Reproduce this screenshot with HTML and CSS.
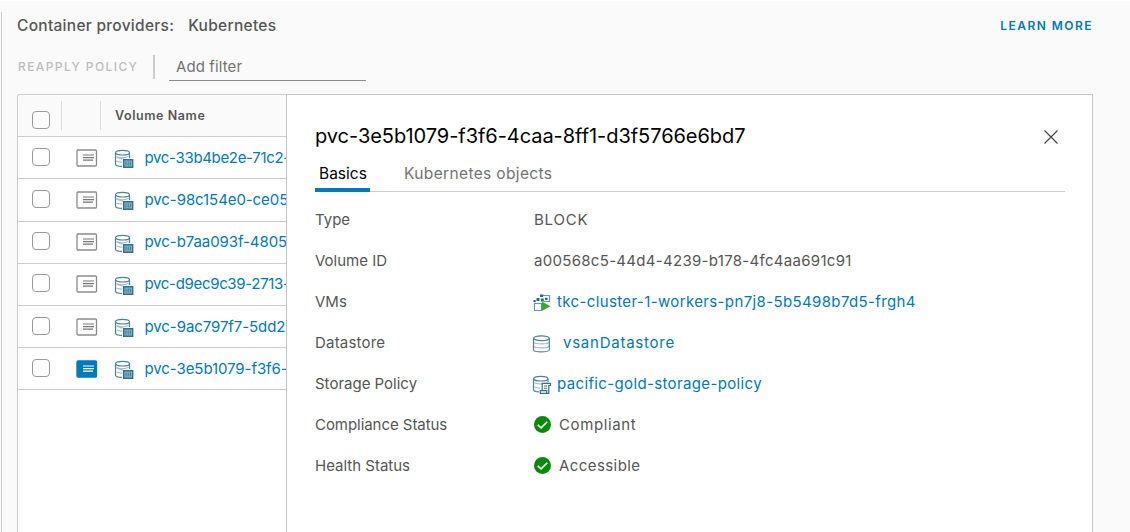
FILE: index.html
```html
<!DOCTYPE html>
<html lang="en">
<head>
<meta charset="utf-8">
<title>Container volumes</title>
<link rel="stylesheet" href="styles.css">
</head>
<body>
<svg class="defs" aria-hidden="true">
  <symbol id="note" viewBox="0 0 22 18">
    <rect class="note-box" x="1" y="1" width="19.5" height="16" rx="1"/>
    <path class="note-lines" d="M7 6h11M7 8.600h11M7 11.200h10"/>
  </symbol>
  <symbol id="disk" viewBox="0 0 20 20">
    <path class="disk-fill" d="M1.500 8c1 2.500 14.800 2.500 15.800 0M1.500 12c1 2.500 14.800 2.500 15.800 0"/>
    <path class="disk-line" d="M1.500 4.200v11.500c0 2.800 15.800 2.800 15.800 0V4.200"/>
    <ellipse class="disk-line" cx="9.400" cy="4.200" rx="7.900" ry="2.400"/>
  </symbol>
  <symbol id="volume" viewBox="0 0 20 20">
    <path class="disk-fill" d="M2.500 7.500c3 1.600 8 1.600 12 0M2.500 12c2 1 4 1.200 6 1M2.500 8.300l6 1.800"/>
    <path class="disk-line" d="M1.500 4v11.200c0 1.300 2.800 2 6.500 2.200M15.500 4v5"/>
    <ellipse class="disk-line" cx="8.500" cy="3.700" rx="7" ry="2.300"/>
    <path class="bin" d="M9.700 10.700h9v7.500h-9z"/>
    <path class="bin-lines" d="M12 12.500v4M14.200 12.500v4M16.400 12.500v4"/>
  </symbol>
  <symbol id="policy" viewBox="0 0 20 20">
    <path class="disk-fill" d="M2.500 7.800c3 1.600 9 1.600 13 0M2.500 12c2 1 3 1.200 5.500 1"/>
    <path class="disk-line" d="M1.500 4v10.700c0 1.300 2.500 2 5.500 2.200M16 4v3"/>
    <ellipse class="disk-line" cx="8.800" cy="3.700" rx="7.200" ry="2.300"/>
    <path class="scroll" d="M10.200 15.500V8.300h8.300v2.200h-1.700v7.800H8.300v-2.600h6.400v2.600h2"/>
    <path class="bin-lines" d="M12 11h3M12 13.300h3"/>
  </symbol>
  <symbol id="vm" viewBox="0 0 20 20">
    <path class="vm-line" d="M9 2.500h8.500v6H12M2.500 10.500h7v7h-7z"/>
    <path class="vm-solid" d="M8 1.500h3.200v2.500H8zM4.500 5h3v3h-3zM8.800 5.500h3v3h-3zM1.500 7h2.200v2.200H1.500zM13 4.800h2.500v2.200H13z"/>
    <path class="vm-play" d="M9.800 8.400l8.800 4.800-8.800 4.800z"/>
  </symbol>
  <symbol id="ok" viewBox="0 0 16 16">
    <circle class="ok-disc" cx="8" cy="8" r="8"/>
    <path class="ok-tick" d="M3.500 8.300l3.200 2.900 5.800-5.800"/>
  </symbol>
</svg>

<main class="page">
  <header class="top">
    <h1 class="providers"><span>Container providers:</span><span>Kubernetes</span></h1>
    <a class="learn">LEARN MORE</a>
  </header>
  <div class="toolbar">
    <span class="reapply">REAPPLY POLICY</span>
    <span class="divider"></span>
    <span class="filter">Add filter</span>
  </div>
  <div class="content">
    <section class="grid">
      <div class="row head"><span class="check"></span><span class="head-detail"></span><span class="head-name">Volume Name</span></div>
      <div class="row"><span class="check"></span><svg class="note"><use href="#note"/></svg><svg class="icon"><use href="#volume"/></svg><a class="name tight">pvc-33b4be2e-71c2-</a></div>
      <div class="row"><span class="check"></span><svg class="note"><use href="#note"/></svg><svg class="icon"><use href="#volume"/></svg><a class="name snug">pvc-98c154e0-ce05</a></div>
      <div class="row"><span class="check"></span><svg class="note"><use href="#note"/></svg><svg class="icon"><use href="#volume"/></svg><a class="name snug">pvc-b7aa093f-4805</a></div>
      <div class="row"><span class="check"></span><svg class="note"><use href="#note"/></svg><svg class="icon"><use href="#volume"/></svg><a class="name tight">pvc-d9ec9c39-2713-</a></div>
      <div class="row"><span class="check"></span><svg class="note"><use href="#note"/></svg><svg class="icon"><use href="#volume"/></svg><a class="name snug">pvc-9ac797f7-5dd2</a></div>
      <div class="row"><span class="check"></span><svg class="note active"><use href="#note"/></svg><svg class="icon"><use href="#volume"/></svg><a class="name snug">pvc-3e5b1079-f3f6-4</a></div>
    </section>
    <section class="panel">
      <div class="panel-head">
        <h2 class="title">pvc-3e5b1079-f3f6-4caa-8ff1-d3f5766e6bd7</h2>
        <svg class="close" viewBox="0 0 16 16"><path d="M1.500 1.500l13 13M14.500 1.500l-13 13"/></svg>
      </div>
      <nav class="tabs"><span class="tab selected">Basics</span><span class="tab objects">Kubernetes objects</span></nav>
      <dl class="facts">
        <dt>Type</dt><dd class="v-type">BLOCK</dd>
        <dt>Volume ID</dt><dd class="v-id">a00568c5-44d4-4239-b178-4fc4aa691c91</dd>
        <dt>VMs</dt><dd><svg class="icon"><use href="#vm"/></svg><a class="v-vm">tkc-cluster-1-workers-pn7j8-5b5498b7d5-frgh4</a></dd>
        <dt class="k-ds">Datastore</dt><dd><svg class="icon"><use href="#disk"/></svg><a class="v-ds">vsanDatastore</a></dd>
        <dt>Storage Policy</dt><dd><svg class="icon"><use href="#policy"/></svg><a class="v-sp">pacific-gold-storage-policy</a></dd>
        <dt class="k-cs">Compliance Status</dt><dd><svg class="ok"><use href="#ok"/></svg><span class="v-cs">Compliant</span></dd>
        <dt>Health Status</dt><dd><svg class="ok"><use href="#ok"/></svg><span class="v-hs">Accessible</span></dd>
      </dl>
    </section>
  </div>
</main>
</body>
</html>
```
FILE: styles.css
```css
* { box-sizing: border-box; }
body { margin: 0; height: 532px; overflow: hidden; padding-top: 1px; background: #fff; color: #565656; font-family: Inter, "Liberation Sans", sans-serif; font-size: 15px; line-height: 20px; }
h1, h2, dl, dt, dd { margin: 0; font-weight: 400; }
a { color: #0079b8; }
.defs { display: block; width: 0; height: 0; }
.page { height: 531px; padding-left: 17px; background: linear-gradient(#ccc, #ccc) 1px 11px / 1px 100% no-repeat #fafafa; overflow: hidden; }
.top { display: flex; justify-content: space-between; width: 1075px; padding-top: 15px; height: 44px; white-space: nowrap; }
.providers { display: flex; gap: 14px; font-size: 15.5px; font-weight: 500; letter-spacing: 0.28px; }
.learn { font-size: 12px; font-weight: 600; letter-spacing: 1.45px; margin-right: -1px; }
.toolbar { display: flex; align-items: center; height: 49px; padding-bottom: 6px; white-space: nowrap; }
.reapply { width: 136px; font-size: 12px; font-weight: 500; letter-spacing: 1.4px; color: #bdbdbd; padding-left: 1px; }
.divider { width: 2px; height: 24px; background: #ccc; }
.filter { width: 197px; height: 28px; margin-left: 14px; padding: 4px 7px; border-bottom: 1px solid #8c8c8c; color: #737373; letter-spacing: 0.1px; }
.content { display: flex; height: 438px; width: 1076px; }
.grid { flex: none; width: 270px; border: 1px solid #ccc; border-width: 1px 0 0 1px; border-radius: 3px 3px 0 0; overflow: hidden; background: #fff; }
.row { display: flex; align-items: center; height: 42.2px; border-bottom: 1px solid #ccc; padding-left: 14px; white-space: nowrap; }
.check { flex: none; width: 18px; height: 18px; margin-top: -2px; border: 1px solid #999; border-radius: 4px; background: #fff; }
.head { background: #fafafa; }
.head .check { margin-top: 8px; }
.head-detail { width: 40px; height: 29px; margin-left: 11px; border: solid #ddd; border-width: 0 1px; }
.head-name { margin-left: 14px; font-size: 12.5px; font-weight: 600; letter-spacing: 0.58px; }
.note { flex: none; width: 22px; height: 18px; margin: 0 0 0 26px; }
.icon { flex: none; width: 20px; height: 20px; }
.row .icon { margin: 3px 0 0 16px; }
.name { margin-left: 10.5px; }
.snug { letter-spacing: -0.08px; }
.tight { letter-spacing: -0.33px; }
.note-box { fill: var(--box, #fff); stroke: var(--box, #8c8c8c); stroke-width: 1.3; }
.note-lines { fill: none; stroke: var(--line, #777); stroke-width: 1.2; }
.active { --box: #0079b8; --line: #fff; }
.disk-line, .disk-fill, .vm-line { fill: none; stroke: #4e8296; stroke-width: 1.2; }
.disk-fill { stroke: #9fbdce; }
.bin { fill: #87b4cb; stroke: #31718b; stroke-width: 1.4; }
.bin-lines { fill: none; stroke: #41768c; stroke-width: 1; }
.scroll { fill: #fff; stroke: #31718b; stroke-width: 1.2; }
.vm-line { stroke: #659aae; }
.vm-solid { fill: #266a85; }
.vm-play { fill: #3fa535; }
.ok { flex: none; width: 17px; height: 17px; margin-left: 1px; margin-top: -1px; }
.ok-disc { fill: #078a07; }
.ok-tick { fill: none; stroke: #fff; stroke-width: 1.6; }
.panel { flex: none; width: 807px; border: 1px solid #c4c4c4; border-bottom: 0; margin-left: -1px; background: #fff; padding: 0 27px 0 28px; }
.panel-head { display: flex; justify-content: space-between; height: 61px; padding-top: 27px; }
.title { font-size: 20px; line-height: 28px; color: #000; white-space: nowrap; letter-spacing: -0.05px; }
.close { width: 16px; height: 16px; margin: 7px 6px 0 0; fill: none; stroke: #444; stroke-width: 1.2; }
.tabs { display: flex; gap: 30px; height: 36px; border-bottom: 1px solid #ccc; }
.tab { height: 36px; padding: 8px 4px 0; font-size: 15.5px; color: #737373; white-space: nowrap; }
.selected { width: 55px; color: #000; border-bottom: 4px solid #0079b8; }
.objects { letter-spacing: 0.36px; }
.facts { display: grid; grid-template-columns: 217px 1fr; grid-auto-rows: 41.1px; align-items: center; padding-top: 7px; white-space: nowrap; }
.facts dd { display: flex; align-items: center; }
.facts .icon { margin-top: 2px; }
.v-type { padding-left: 2px; letter-spacing: 0.8px; }
.v-id { padding-left: 2px; letter-spacing: 0.3px; }
.v-vm { margin-left: 5px; letter-spacing: 0.37px; }
.v-ds { margin-left: 11px; letter-spacing: 0.76px; }
.v-sp { margin-left: 5px; letter-spacing: 0.36px; }
.ok { margin-left: 2px; }
.v-cs { margin-left: 8px; letter-spacing: 0.6px; }
.v-hs { margin-left: 8px; letter-spacing: 0.42px; }
.k-ds { letter-spacing: 0.2px; }
.k-cs { letter-spacing: -0.05px; }
```
